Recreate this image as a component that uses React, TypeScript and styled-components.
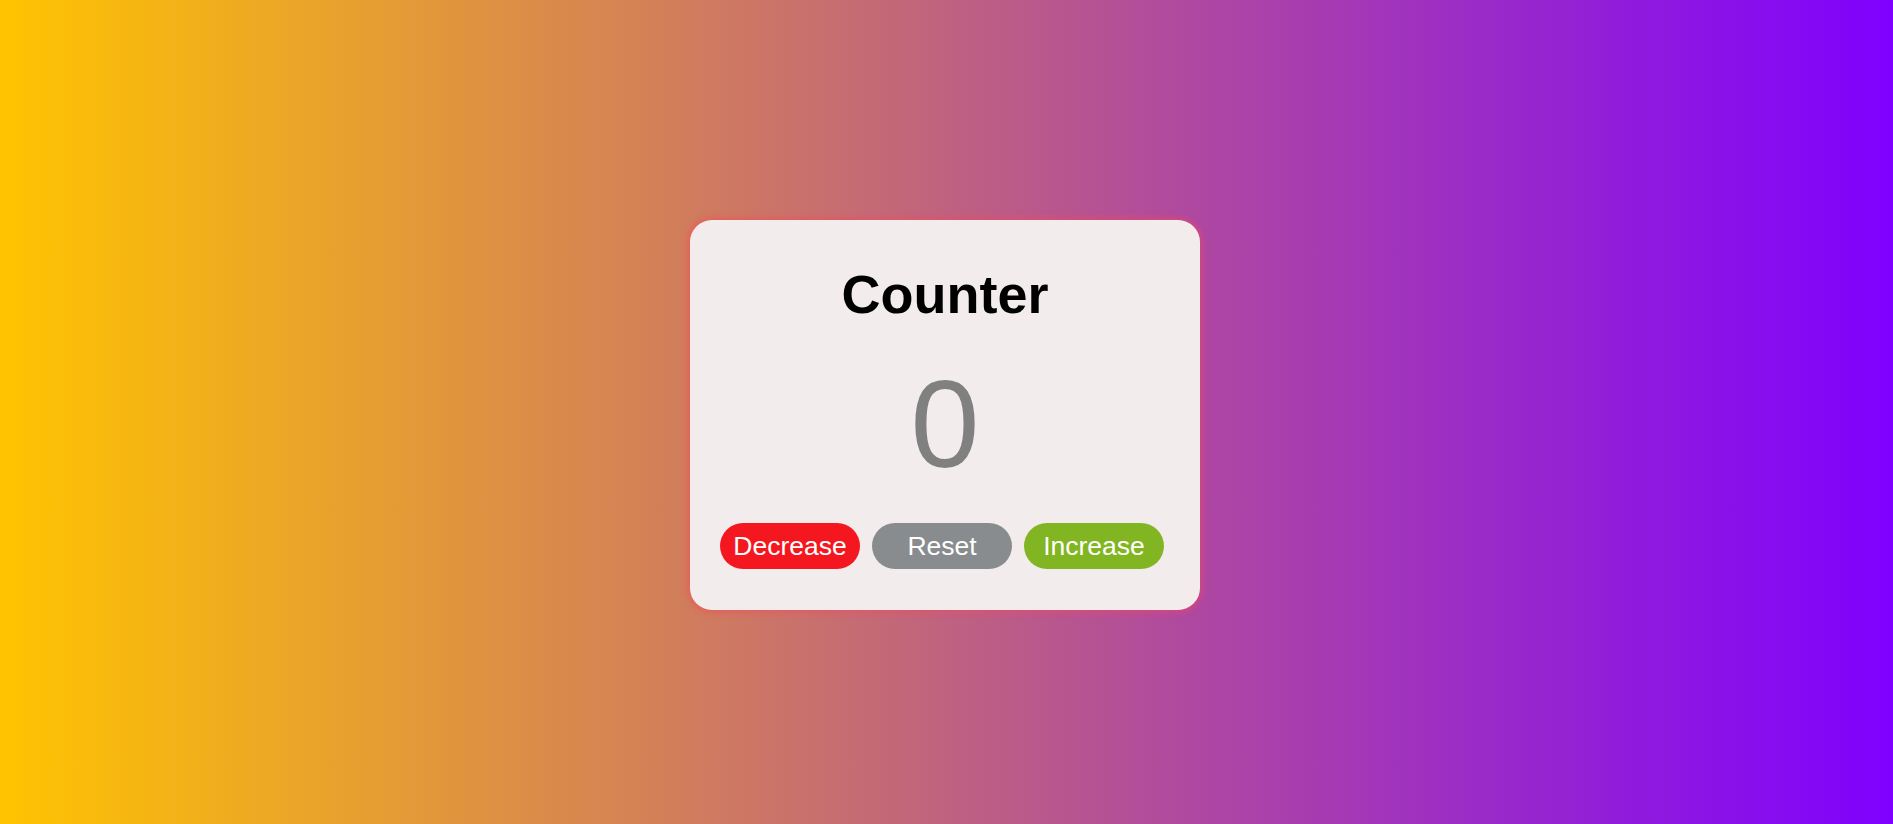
import styled, { createGlobalStyle } from "styled-components";
import { useState } from "react";

const GlobalStyle = createGlobalStyle`
  html, body {
    margin: 0;
    padding: 0;
  }
  body {
    font-family: "Liberation Sans", Arial, sans-serif;
  }
`;

const Page = styled.div`
  width: 100%;
  height: 100vh;
  display: flex;
  align-items: center;
  justify-content: center;
  background: linear-gradient(to right, #ffc400, #7f00ff);
`;

const Card = styled.div`
  width: 510px;
  box-sizing: border-box;
  margin: 5px 3px 0 0;
  padding: 47px 0 41px;
  background: #f2ecec;
  border-radius: 22px;
  box-shadow: 0 0 6px 2px rgba(250, 70, 90, 0.55);
  display: flex;
  flex-direction: column;
  align-items: center;
`;

const Title = styled.h1`
  margin: 0;
  font-size: 54px;
  line-height: 1;
  font-weight: 700;
  color: #000;
`;

const Count = styled.div`
  margin-top: 41px;
  font-size: 124px;
  line-height: 1;
  color: #808080;
`;

const Buttons = styled.div`
  margin-top: 37px;
  align-self: stretch;
  display: flex;
  gap: 12px;
  padding: 0 36px 0 30px;
`;

const Button = styled.button<{ $bg: string }>`
  width: 140px;
  height: 46px;
  border: none;
  border-radius: 23px;
  padding: 0;
  background: ${(p) => p.$bg};
  color: #fff;
  font-family: "Liberation Sans", Arial, sans-serif;
  font-size: 26.5px;
  line-height: 46px;
  cursor: pointer;
`;

export default function App() {
  const [count, setCount] = useState(0);

  return (
    <>
      <GlobalStyle />
      <Page>
        <Card>
          <Title>Counter</Title>
          <Count>{count}</Count>
          <Buttons>
            <Button $bg="#f51720" onClick={() => setCount(count - 1)}>
              Decrease
            </Button>
            <Button $bg="#898c8e" onClick={() => setCount(0)}>
              Reset
            </Button>
            <Button $bg="#81b622" onClick={() => setCount(count + 1)}>
              Increase
            </Button>
          </Buttons>
        </Card>
      </Page>
    </>
  );
}
